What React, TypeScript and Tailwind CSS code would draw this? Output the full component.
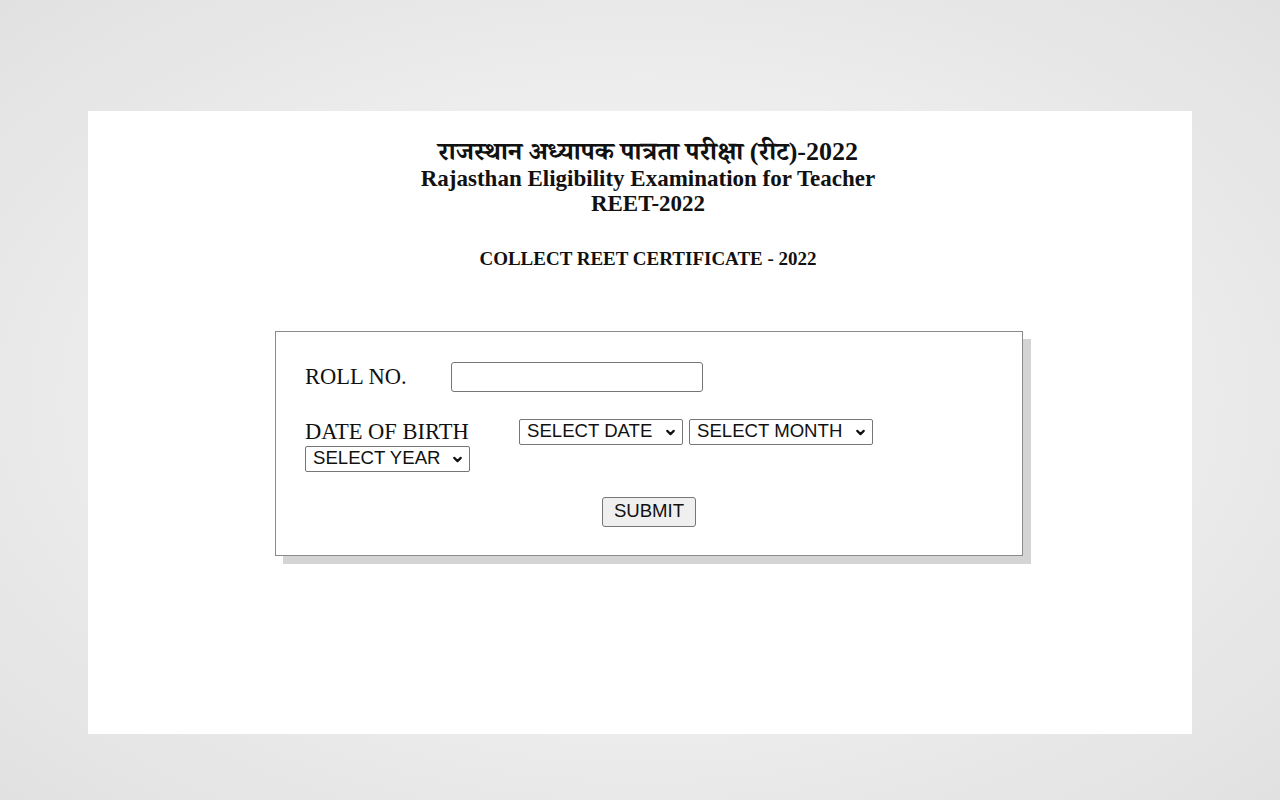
import { ChevronDown } from 'lucide-react';

const serif = { fontFamily: '"Liberation Serif", "Noto Serif Devanagari", "Noto Sans Devanagari", "Noto Sans", serif' };
const sans = { fontFamily: '"Liberation Sans", Arial, sans-serif' };

function FakeSelect({ label, width }: { label: string; width: string }) {
  return (
    <div
      className={`relative inline-flex h-[26px] items-center rounded-[2px] border border-[#767676] bg-white pl-[7px] text-[18.6px] leading-none text-[#111] ${width}`}
      style={sans}
    >
      <span>{label}</span>
      <ChevronDown className="absolute right-[5px] top-[6px] h-[13px] w-[13px]" strokeWidth={4} />
    </div>
  );
}

export default function App() {
  return (
    <div className="h-[800px] w-full overflow-hidden bg-[radial-gradient(ellipse_at_center,#fbfbfb_0%,#e1e1e1_100%)] px-[88px] pt-[111px]">
      <div className="h-[623px] w-full bg-white pt-[27px]" style={serif}>
        {/* header */}
        <div className="pl-[16px] text-center font-bold text-[#111]">
          <p className="text-[26px] leading-[28px]">राजस्थान अध्यापक पात्रता परीक्षा (रीट)-2022</p>
          <p className="text-[23px] leading-[25px]">Rajasthan Eligibility Examination for Teacher</p>
          <p className="text-[23px] leading-[25px]">REET-2022</p>
          <p className="mt-[33px] text-[19px] leading-[20px]">COLLECT REET CERTIFICATE - 2022</p>
        </div>

        {/* form box */}
        <div className="ml-[187px] mt-[62px] h-[225px] w-[748px] border border-[#8a8a8a] bg-white px-[29px] pt-[28px] shadow-[8px_8px_0_0_#d4d4d4]">
          <div className="flex items-center">
            <span className="w-[146px] text-[22.5px] text-[#111]">ROLL NO.</span>
            <div className="h-[30px] w-[252px] rounded-[3px] border border-[#767676]" />
          </div>

          <div className="mt-[25px] flex items-center">
            <span className="w-[214px] text-[22.5px] leading-[26px] text-[#111]">DATE OF BIRTH</span>
            <FakeSelect label="SELECT DATE" width="w-[164px]" />
            <div className="w-[6px]" />
            <FakeSelect label="SELECT MONTH" width="w-[184px]" />
          </div>
          <div className="mt-[1px]">
            <FakeSelect label="SELECT YEAR" width="w-[165px]" />
          </div>

          <div className="mt-[25px] flex justify-center">
            <button
              className="h-[30px] w-[94px] rounded-[3px] border border-[#767676] bg-[#efefef] text-[18.6px] leading-none text-[#111]"
              style={sans}
            >
              SUBMIT
            </button>
          </div>
        </div>
      </div>
    </div>
  );
}
